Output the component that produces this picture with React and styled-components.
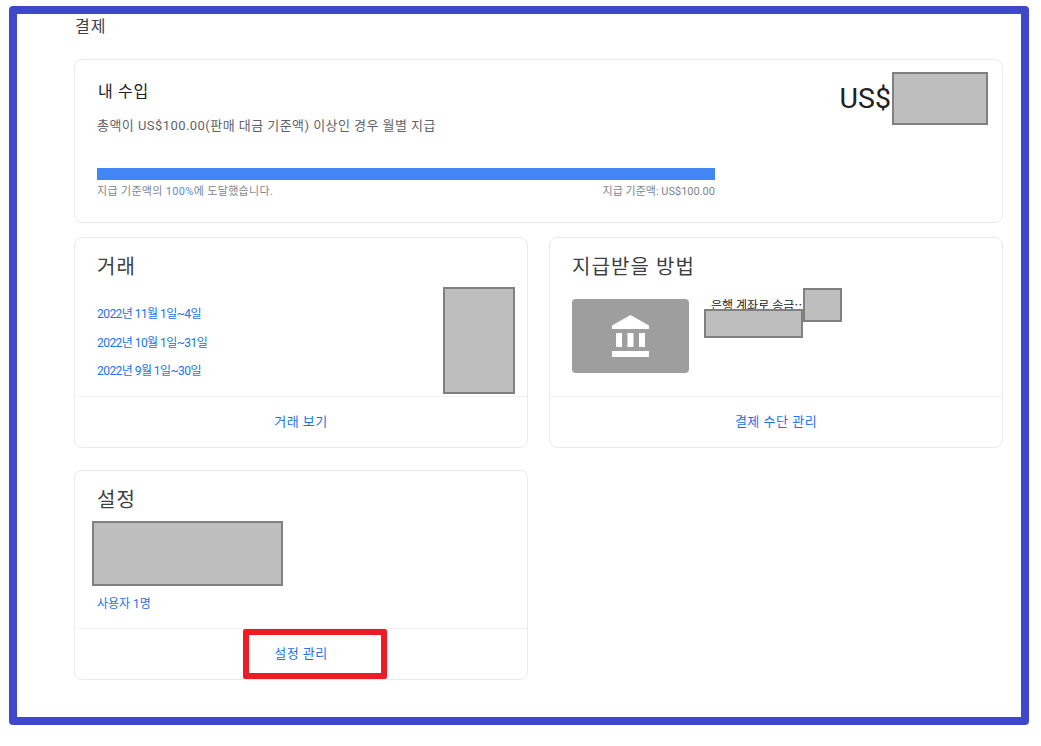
import React from 'react';
import styled, { createGlobalStyle } from 'styled-components';

const blue = '#1a73e8';
const hairline = '#e8eaed';

const GlobalStyle = createGlobalStyle`
  html, body {
    margin: 0;
    background: #fff;
  }
  body {
    font-family: Roboto, "Noto Sans CJK KR", sans-serif;
    color: #3c4043;
  }
`;

const Frame = styled.div`
  box-sizing: border-box;
  width: 1020px;
  height: 719px;
  margin: 6px 0 0 9px;
  padding: 0 18px 0 57px;
  border: 8px solid #3f48cc;
  border-radius: 4px;
`;

const PageTitle = styled.h1`
  margin: 0 0 20px;
  padding: 1px 0 0 1px;
  font-size: 16px;
  font-weight: 400;
  line-height: 24px;
  letter-spacing: 1px;
  color: #3c4043;
`;

const Card = styled.section`
  position: relative;
  box-sizing: border-box;
  display: flex;
  flex-direction: column;
  height: ${(p) => p.$height}px;
  background: #fff;
  border: 1px solid ${hairline};
  border-radius: 8px;
`;

const EarningsRow = styled.div`
  display: flex;
  justify-content: space-between;
  height: 100%;
  padding: 0 14px 0 22px;
`;

const EarningsInfo = styled.div`
  width: 618px;
  padding-top: 20px;
`;

const EarningsTitle = styled.h2`
  margin: 0;
  padding-left: 1px;
  font-size: 16px;
  font-weight: 400;
  line-height: 24px;
  letter-spacing: 0.7px;
  color: #202124;
`;

const EarningsNote = styled.p`
  margin: 12px 0 32px;
  font-size: 13px;
  line-height: 19px;
  letter-spacing: 0.45px;
  color: #5f6368;
`;

const ProgressBar = styled.div`
  height: 12px;
  margin-top: 33px;
  background: #4285f4;
`;

const ProgressCaption = styled.div`
  display: flex;
  justify-content: space-between;
  margin-top: 4px;
  font-size: 11px;
  line-height: 16px;
  color: #80868b;
`;

const ProgressLabel = styled.span`
  letter-spacing: 0.33px;
`;

const Percent = styled.span`
  color: #5b8ed6;
`;

const Amount = styled.div`
  display: flex;
  align-items: flex-start;
  gap: 1px;
  margin-top: 13px;
  font-size: 28.5px;
  line-height: 52px;
  color: #202124;
`;

const Redaction = styled.div`
  box-sizing: border-box;
  flex: none;
  width: ${(p) => p.$w}px;
  height: ${(p) => p.$h}px;
  background: #bebebe;
  border: 2px solid #808080;
`;

const AmountRedaction = styled(Redaction)`
  margin-top: -1px;
`;

const OverlayRedaction = styled(Redaction)`
  position: absolute;
  top: ${(p) => p.$top}px;
  left: ${(p) => p.$left}px;
`;

const CardGrid = styled.div`
  display: grid;
  grid-template-columns: 1fr 1fr;
  column-gap: 21px;
  margin-top: ${(p) => p.$gap}px;
`;

const CardBody = styled.div`
  flex: 1;
  padding: 15px 22px 0;
`;

const CardTitle = styled.h2`
  margin: 0;
  font-size: 20px;
  font-weight: 400;
  line-height: 28px;
  letter-spacing: 1.1px;
  color: #3c4043;
`;

const DateList = styled.ul`
  margin: 19px 0 0;
  padding: 0;
  list-style: none;
`;

const DateItem = styled.li`
  height: 28.5px;
  font-size: 12px;
  line-height: 28px;
  letter-spacing: -0.55px;
  color: ${blue};
`;

const CardFooter = styled.div`
  position: relative;
  display: flex;
  align-items: center;
  justify-content: center;
  box-sizing: border-box;
  height: 51px;
  padding-bottom: 4px;
  border-top: 1px solid #f1f3f4;
  font-size: 13px;
  letter-spacing: 0.5px;
  color: ${blue};
`;

const PaymentRow = styled.div`
  display: flex;
  margin-top: 18px;
`;

const BankTile = styled.div`
  display: flex;
  align-items: center;
  justify-content: center;
  width: 117px;
  height: 74px;
  background: #9e9e9e;
  border-radius: 4px;
`;

const BankName = styled.div`
  margin-left: 22px;
  font-size: 12px;
  line-height: 14px;
  color: #202124;
  white-space: nowrap;
`;

const SettingsRedaction = styled(Redaction)`
  margin: 7px 0 0 -5px;
`;

const UserCount = styled.div`
  margin-top: 9px;
  font-size: 12px;
  line-height: 18px;
  color: ${blue};
`;

const Highlight = styled.div`
  position: absolute;
  top: 0;
  left: 168px;
  box-sizing: border-box;
  width: 144px;
  height: 50px;
  border: 6px solid #ed1c24;
  border-radius: 2px;
`;

const BankIcon = () => (
  <svg width="37" height="42" viewBox="0 0 37 42" fill="#fff" aria-hidden="true">
    <path d="M18.5 0 37 10.5V14H0v-3.5z" />
    <rect x="4" y="18" width="6" height="14" />
    <rect x="15.5" y="18" width="6" height="14" />
    <rect x="27" y="18" width="6" height="14" />
    <rect x="0" y="36" width="37" height="6" />
  </svg>
);

export default function App() {
  return (
    <>
      <GlobalStyle />
      <Frame>
        <PageTitle>결제</PageTitle>

        <Card $height={164}>
          <EarningsRow>
            <EarningsInfo>
              <EarningsTitle>내 수입</EarningsTitle>
              <EarningsNote>총액이 US$100.00(판매 대금 기준액) 이상인 경우 월별 지급</EarningsNote>
              <ProgressBar />
              <ProgressCaption>
                <ProgressLabel>
                  지급 기준액의 <Percent>100%</Percent>에 도달했습니다.
                </ProgressLabel>
                <span>지급 기준액: US$100.00</span>
              </ProgressCaption>
            </EarningsInfo>
            <Amount>
              US$
              <AmountRedaction $w={96} $h={53} />
            </Amount>
          </EarningsRow>
        </Card>

        <CardGrid $gap={14}>
          <Card $height={211}>
            <CardBody>
              <CardTitle>거래</CardTitle>
              <DateList>
                <DateItem>2022년 11월 1일~4일</DateItem>
                <DateItem>2022년 10월 1일~31일</DateItem>
                <DateItem>2022년 9월 1일~30일</DateItem>
              </DateList>
            </CardBody>
            <OverlayRedaction $top={49} $left={368} $w={72} $h={107} />
            <CardFooter>거래 보기</CardFooter>
          </Card>

          <Card $height={211}>
            <CardBody>
              <CardTitle>지급받을 방법</CardTitle>
              <PaymentRow>
                <BankTile>
                  <BankIcon />
                </BankTile>
                <BankName>은행 계좌로 송금⋯</BankName>
              </PaymentRow>
            </CardBody>
            <OverlayRedaction $top={71} $left={154} $w={99} $h={29} />
            <OverlayRedaction $top={50} $left={253} $w={39} $h={34} />
            <CardFooter>결제 수단 관리</CardFooter>
          </Card>
        </CardGrid>

        <CardGrid $gap={22}>
          <Card $height={210}>
            <CardBody>
              <CardTitle>설정</CardTitle>
              <SettingsRedaction $w={191} $h={65} />
              <UserCount>사용자 1명</UserCount>
            </CardBody>
            <CardFooter>
              설정 관리
              <Highlight />
            </CardFooter>
          </Card>
        </CardGrid>
      </Frame>
    </>
  );
}
